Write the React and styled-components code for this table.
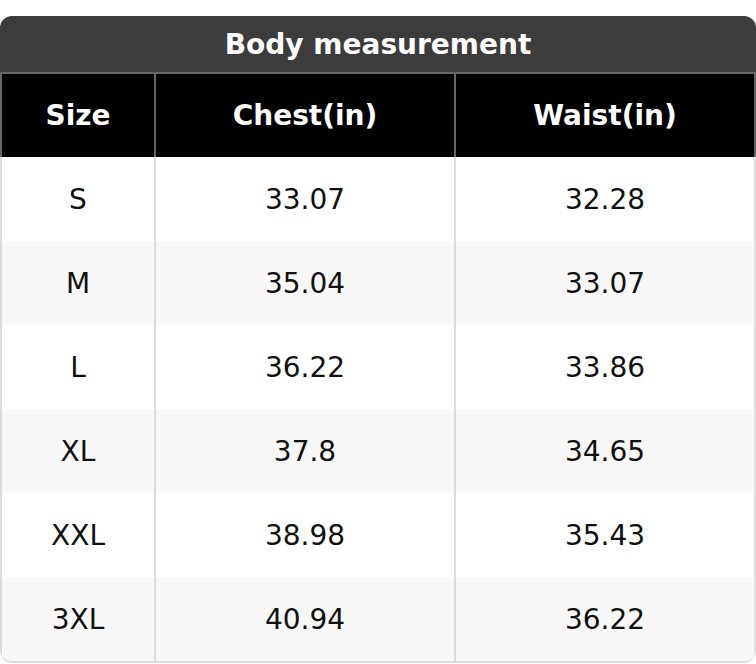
import styled, { createGlobalStyle } from "styled-components";

const GlobalStyle = createGlobalStyle`
  body {
    margin: 0;
    background: #fff;
    font-family: "DejaVu Sans", "Liberation Sans", sans-serif;
  }
`

const Card = styled.div`
    margin-top: 16px;
    border-radius: 12px;
    overflow: hidden;
    font-size: 28px;
`
const Title = styled.div`
    height: 56px;
    background: #3c3c3c;
    border-bottom: 2px solid #666;
    color: #fff;
    font-weight: 700;
    display: flex;
    align-items: center;
    justify-content: center;
`
const Body = styled.div`
    border-bottom: 2px solid #ddd;
    border-radius: 0 0 12px 12px;
    overflow: hidden;
`
const Row = styled.div`
    display: flex;
    height: ${(p) => (p.head ? 83 : 84)}px;
    background: ${(p) => (p.head ? "#000" : p.shade ? "#f8f8f8" : "#fff")};
    color: ${(p) => (p.head ? "#fff" : "#111")};
    font-weight: ${(p) => (p.head ? 700 : 400)};
    border-left: 2px solid ${(p) => (p.head ? "#666" : "#ddd")};
    border-right: 2px solid ${(p) => (p.head ? "#666" : "#ddd")};
`
const Cell = styled.div`
    display: flex;
    align-items: center;
    justify-content: center;
    ${(p) => (p.first ? "width: 152px;" : "flex: 1;")}
    ${(p) => !p.first && `border-left: 2px solid ${p.head ? "#666" : "#ddd"};`}
`

const rows = [
    ["S", "33.07", "32.28"],
    ["M", "35.04", "33.07"],
    ["L", "36.22", "33.86"],
    ["XL", "37.8", "34.65"],
    ["XXL", "38.98", "35.43"],
    ["3XL", "40.94", "36.22"],
]

const App = () => {
    return (
        <>
            <GlobalStyle />
            <Card>
                <Title>Body measurement</Title>
                <Body>
                    <Row head>
                        <Cell head first>Size</Cell>
                        <Cell head>Chest(in)</Cell>
                        <Cell head>Waist(in)</Cell>
                    </Row>
                    {rows.map((r, i) => (
                        <Row key={r[0]} shade={i % 2 === 1}>
                            <Cell first>{r[0]}</Cell>
                            <Cell>{r[1]}</Cell>
                            <Cell>{r[2]}</Cell>
                        </Row>
                    ))}
                </Body>
            </Card>
        </>
    )
}

export default App
